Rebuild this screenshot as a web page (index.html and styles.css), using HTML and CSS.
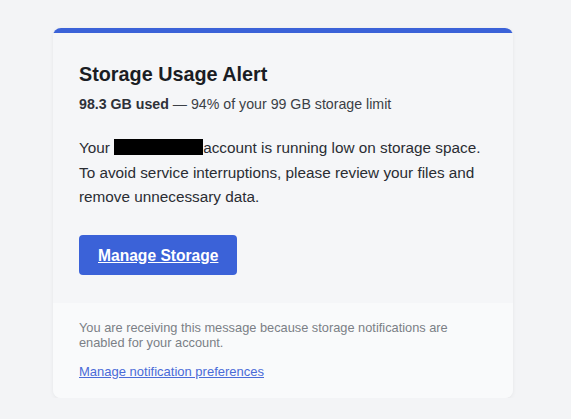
FILE: index.html
```html
<!DOCTYPE html>
<html>
<head>
<meta charset="utf-8">
<link rel="stylesheet" href="styles.css">
</head>
<body>
<div class="page">
  <div class="card">
    <div class="bar"></div>
    <div class="main">
      <h1 class="title">Storage Usage Alert</h1>
      <p class="usage"><strong>98.3 GB used</strong> — 94% of your 99 GB storage limit</p>
      <p class="body">Your <span class="redact"></span>account is running low on storage space. To avoid service interruptions, please review your files and remove unnecessary data.</p>
      <a class="btn" href="#">Manage Storage</a>
    </div>
    <div class="footer">
      <p class="note">You are receiving this message because storage notifications are enabled for your account.</p>
      <a class="pref" href="#">Manage notification preferences</a>
    </div>
  </div>
</div>
</body>
</html>
```
FILE: styles.css
```css
html, body {
  margin: 0;
  padding: 0;
  background: #f3f4f6;
  font-family: "Liberation Sans", Arial, sans-serif;
}
.page {
  padding: 28px 0 0 53px;
}
.card {
  width: 460px;
  background: #f5f6f8;
  border-radius: 8px;
  overflow: hidden;
  box-shadow: 0 1px 4px rgba(0,0,0,0.06);
}
.bar {
  height: 5px;
  background: #3b62d8;
}
.main {
  padding: 29px 26px 28px;
}
.title {
  margin: 0;
  font-size: 19.8px;
  line-height: 24px;
  font-weight: bold;
  color: #1a1d24;
}
.usage {
  margin: 9px 0 0;
  font-size: 14.2px;
  line-height: 18px;
  color: #3b3f46;
}
.usage strong {
  color: #2e3138;
}
.body {
  margin: 23px 0 0;
  font-size: 15.3px;
  line-height: 24.5px;
  color: #2a2d33;
}
.redact {
  display: inline-block;
  width: 89px;
  height: 16px;
  background: #000;
  vertical-align: -2px;
}
.btn {
  display: inline-block;
  margin-top: 25px;
  padding: 11px 19px 10px;
  background: #3b62d8;
  color: #fff;
  font-size: 15.6px;
  line-height: 19px;
  font-weight: bold;
  border-radius: 4px;
  text-decoration: underline;
}
.footer {
  background: #f9fafb;
  padding: 17px 26px 18px;
}
.note {
  margin: 0;
  font-size: 12.8px;
  line-height: 15px;
  color: #7b7f86;
}
.pref {
  display: inline-block;
  margin-top: 14px;
  font-size: 13px;
  line-height: 16px;
  color: #4a6bd8;
}
```
